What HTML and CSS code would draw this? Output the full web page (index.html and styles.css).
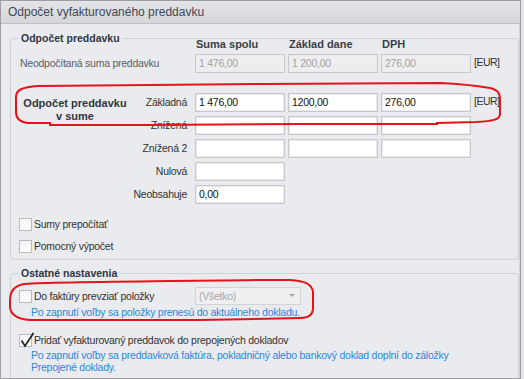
FILE: index.html
```html
<!DOCTYPE html>
<html>
<head>
<meta charset="UTF-8">
<meta name="viewport" content="width=device-width, initial-scale=1.0">
<title>Odpočet vyfakturovaného preddavku</title>
<link rel="stylesheet" href="styles.css">
</head>
<body>
    <div class="window">
        <div class="titlebar">Odpočet vyfakturovaného preddavku</div>
        <div class="content">
            <div class="group group-main">
                <div class="group-title">Odpočet preddavku</div>
                <div class="form-grid">
                    <span class="col-head c1">Suma spolu</span>
                    <span class="col-head c2">Základ dane</span>
                    <span class="col-head c3">DPH</span>

                    <span class="row-label muted r1">Neodpočítaná suma preddavku</span>
                    <span class="field disabled c1 r1">1 476,00</span>
                    <span class="field disabled c2 r1">1 200,00</span>
                    <span class="field disabled c3 r1">276,00</span>
                    <span class="unit r1">[EUR]</span>

                    <span class="section-label">Odpočet preddavku<br>v sume</span>
                    <span class="row-label right r2">Základná</span>
                    <span class="field c1 r2">1 476,00</span>
                    <span class="field c2 r2">1200,00</span>
                    <span class="field c3 r2">276,00</span>
                    <span class="unit r2">[EUR]</span>

                    <span class="row-label right r3">Znížená</span>
                    <span class="field c1 r3"></span>
                    <span class="field c2 r3"></span>
                    <span class="field c3 r3"></span>

                    <span class="row-label right r4">Znížená 2</span>
                    <span class="field c1 r4"></span>
                    <span class="field c2 r4"></span>
                    <span class="field c3 r4"></span>

                    <span class="row-label right r5">Nulová</span>
                    <span class="field c1 r5"></span>

                    <span class="row-label right r6">Neobsahuje</span>
                    <span class="field c1 r6">0,00</span>
                </div>

                <div class="checks">
                    <label class="check"><span class="box"></span>Sumy prepočítať</label>
                    <label class="check"><span class="box"></span>Pomocný výpočet</label>
                </div>
            </div>

            <div class="group group-other">
                <div class="group-title">Ostatné nastavenia</div>
                <div class="option-row">
                    <label class="check check-wide"><span class="box"></span>Do faktúry prevziať položky</label>
                    <span class="select">(Všetko)<span class="arrow"></span></span>
                </div>
                <p class="hint">Po zapnutí voľby sa položky prenesú do aktuálneho dokladu.</p>

                <label class="check check-on">
                    <span class="box">
                        <svg class="tick" width="16" height="16" viewBox="0 0 16 16"><path d="M2.5 8.5 L6 14 L14.5 1" fill="none" stroke="#1e1e1e" stroke-width="1.7"/></svg>
                    </span>Pridať vyfakturovaný preddavok do prepojených dokladov
                </label>
                <p class="hint">Po zapnutí voľby sa preddavková faktúra, pokladničný alebo bankový doklad doplní do záložky<br>Prepojené doklady.</p>
            </div>
        </div>

        <!-- red hand-drawn marks over the form -->
        <svg class="marks" width="524" height="379" viewBox="0 0 524 379">
            <path d="M16 97 C16 90 22 87 38 86 L150 85 L262 84 L440 83 C462 84 478 86 490 88 C498 90 500 93 500 100 L500 114 C500 120 492 121 476 122 L437 123 L437 124 L300 124 L150 125 L50 125 L50 123 L28 123 C19 122 16 118 16 112 Z" fill="none" stroke="#e5131b" stroke-width="2"/>
            <path d="M10 301 C10 291 14 286 24 284 C40 282 100 282 262 280 L290 280 C305 281 312 284 313 292 L313 308 C313 315 308 318 300 318 L200 320 L30 320 C16 319 10 314 10 306 Z" fill="none" stroke="#e5131b" stroke-width="2"/>
        </svg>
    </div>
</body>
</html>
```

FILE: styles.css
```css
body {
    margin: 0;
    padding: 0;
    background-color: #e6e6e8;
    font-family: "Liberation Sans", Arial, sans-serif;
    font-size: 10.5px;
    letter-spacing: -0.25px;
    color: #333;
}
.window {
    position: relative;
    width: 521px;
    height: 379px;
    box-sizing: border-box;
    border: 1px solid #9d9ea2;
    background-color: #eaebee;
    overflow: hidden;
}
.titlebar {
    height: 22px;
    line-height: 22px;
    padding-left: 7px;
    font-size: 12px;
    letter-spacing: 0;
    color: #3f4856;
    background: linear-gradient(#e3e4e7, #d5d6da);
    border-bottom: 1px solid #c0c1c5;
}
.content {
    height: 356px;
    padding: 14px 0 0 9px;
    box-sizing: border-box;
    border-right: 1px solid #d5d6da;
}

/* group boxes */
.group {
    border: 1px solid #cfd0d4;
    border-radius: 4px;
    padding: 0 0 0 8px;
}
.group-title {
    display: table;
    margin: -8px 0 0 -1px;
    padding: 0 3px;
    font-size: 10.5px;
    font-weight: bold;
    letter-spacing: 0;
    line-height: 14px;
    color: #2f3640;
    background-color: #eaebee;
}
.group-main {
    height: 220px;
}
.group-other {
    margin-top: 13px;
    height: 110px;
}

/* grid of amounts */
.form-grid {
    display: grid;
    grid-template-columns: 172px 90px 90px 90px auto;
    grid-template-rows: 11px 19px 12px 19px 19px 19px 19px 19px;
    column-gap: 3px;
    row-gap: 4px;
    margin-top: -6px;
    margin-left: 1px;
}
.c1 { grid-column: 2; }
.c2 { grid-column: 3; }
.c3 { grid-column: 4; }
.r1 { grid-row: 2; }
.r2 { grid-row: 4; }
.r3 { grid-row: 5; }
.r4 { grid-row: 6; }
.r5 { grid-row: 7; }
.r6 { grid-row: 8; }
.col-head {
    grid-row: 1;
    font-weight: bold;
    font-size: 11px;
    letter-spacing: 0;
    line-height: 11px;
    padding-left: 1px;
    color: #3a3f46;
}
.row-label {
    grid-column: 1;
    line-height: 19px;
    white-space: nowrap;
}
.row-label.muted {
    color: #5a5f66;
}
.row-label.right {
    text-align: right;
    padding-right: 5px;
}
.section-label {
    grid-column: 1;
    grid-row: 4 / 6;
    justify-self: start;
    width: 110px;
    padding-top: 4px;
    text-align: center;
    white-space: nowrap;
    font-size: 11px;
    font-weight: bold;
    letter-spacing: 0;
    line-height: 13px;
    color: #2f3640;
}
.field {
    box-sizing: border-box;
    height: 19px;
    line-height: 16px;
    padding-left: 3px;
    background-color: #fff;
    border: 1px solid #c7c8cc;
    box-shadow: inset 0 0 0 1px #ebebee;
    color: #111;
}
.field.disabled {
    background-color: #eeeef0;
    color: #a0a0a4;
}
.unit {
    grid-column: 5;
    padding-top: 2px;
    letter-spacing: -0.5px;
    color: #333;
}

/* checkboxes */
.checks {
    margin-top: 13px;
}
.check {
    display: flex;
    align-items: center;
    height: 14px;
    margin-bottom: 8px;
    color: #333;
}
.box {
    position: relative;
    display: inline-block;
    width: 13px;
    height: 13px;
    box-sizing: border-box;
    margin-right: 2px;
    border: 1px solid #b9babe;
    background: linear-gradient(#f4f4f5, #ffffff);
}
.tick {
    position: absolute;
    left: -1px;
    top: -3px;
}

/* other settings */
.option-row {
    display: flex;
    align-items: center;
    margin-top: 7px;
}
.check-wide {
    width: 176px;
    margin-bottom: 0;
}
.select {
    position: relative;
    box-sizing: border-box;
    width: 106px;
    height: 18px;
    line-height: 16px;
    padding-left: 3px;
    border: 1px solid #d2d3d7;
    background-color: #efeff1;
    color: #a8a8ac;
}
.arrow {
    position: absolute;
    right: 5px;
    top: 6px;
    border-left: 3px solid transparent;
    border-right: 3px solid transparent;
    border-top: 3px solid #a9aaae;
}
.hint {
    margin: 1px 0 0 12px;
    line-height: 12px;
    color: #2e86de;
}
.check-on {
    margin-top: 15px;
    margin-bottom: 2px;
}

.marks {
    position: absolute;
    left: -1px;
    top: -1px;
    pointer-events: none;
}
```
